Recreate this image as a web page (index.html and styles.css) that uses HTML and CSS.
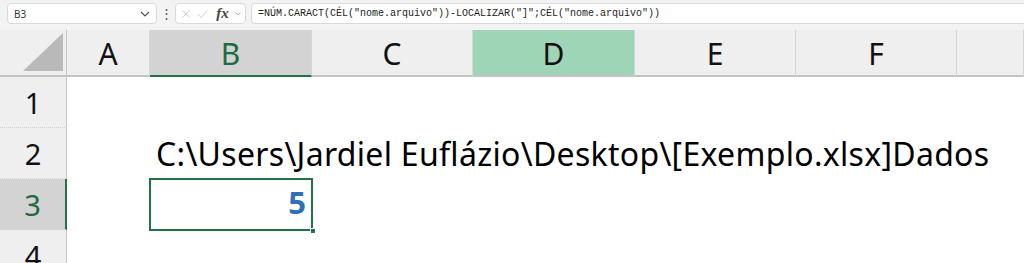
FILE: index.html
```html
<!DOCTYPE html>
<html lang="pt">
<head>
    <meta charset="UTF-8">
    <title>Planilha</title>
    <link rel="stylesheet" href="styles.css">
</head>
<body>
<div class="toolbar">
    <div class="name_box">
        <span>B3</span>
        <svg class="chevron" width="10" height="6" viewBox="0 0 10 6"><path d="M1 1 L5 5 L9 1" fill="none" stroke="#555" stroke-width="1.2"/></svg>
    </div>
    <div class="grip">&#8942;</div>
    <div class="fx_box">
        <svg width="14" height="14" viewBox="0 0 14 14"><path d="M2 2 L12 12 M12 2 L2 12" stroke="#c6c6c6" stroke-width="1.2"/></svg>
        <svg width="16" height="14" viewBox="0 0 16 14"><path d="M1 7 L6 12 L15 2" fill="none" stroke="#c6c6c6" stroke-width="1.2"/></svg>
        <span class="fx">fx</span>
        <svg width="9" height="6" viewBox="0 0 9 6"><path d="M1 1 L4.5 4.5 L8 1" fill="none" stroke="#888" stroke-width="1"/></svg>
    </div>
    <div class="formula_box">=NÚM.CARACT(CÉL("nome.arquivo"))-LOCALIZAR("]";CÉL("nome.arquivo"))</div>
</div>
<div class="sheet">
    <div class="corner"><div class="triangle"></div></div>
    <div class="col_head">A</div>
    <div class="col_head col_active">B</div>
    <div class="col_head">C</div>
    <div class="col_head col_marked">D</div>
    <div class="col_head">E</div>
    <div class="col_head">F</div>
    <div class="col_head"></div>

    <div class="row_head">1</div>
    <div class="cells"></div>

    <div class="row_head">2</div>
    <div class="cell"></div>
    <div class="cell text_cell">C:\Users\Jardiel Euflázio\Desktop\[Exemplo.xlsx]Dados</div>

    <div class="row_head row_active">3</div>
    <div class="cell"></div>
    <div class="cell selected">5<div class="handle"></div></div>
    <div class="cells_rest"></div>

    <div class="row_head">4</div>
    <div class="cells"></div>
</div>
</body>
</html>
```

FILE: styles.css
```css
* {
    box-sizing: border-box;
}

body {
    margin: 0;
    width: 1024px;
    height: 263px;
    overflow: hidden;
    background: white;
    font-family: "Noto Sans", sans-serif;
}

.toolbar {
    height: 30px;
    background: #f3f3f3;
    display: flex;
    align-items: flex-start;
    padding: 3px 0 0 7px;
}

.name_box {
    width: 150px;
    height: 21px;
    background: white;
    border: 1px solid #dadada;
    border-radius: 4px;
    display: flex;
    align-items: center;
    justify-content: space-between;
    padding: 0 6px 0 6px;
    font-size: 10px;
    color: #333;
}

.grip {
    width: 18px;
    text-align: center;
    font-size: 13px;
    line-height: 21px;
    color: #555;
}

.fx_box {
    width: 71px;
    height: 21px;
    background: white;
    border: 1px solid #dadada;
    border-radius: 4px;
    display: flex;
    align-items: center;
    gap: 6px;
    padding: 0 4px 0 5px;
}

.fx {
    font-family: "Liberation Serif", serif;
    font-style: italic;
    font-size: 15px;
    font-weight: bold;
    color: #444;
    margin-left: 2px;
}

.formula_box {
    flex: 1;
    height: 21px;
    margin-left: 5px;
    background: white;
    border: 1px solid #dadada;
    border-right: none;
    border-radius: 4px 0 0 4px;
    font-family: "Liberation Mono", monospace;
    font-size: 10px;
    line-height: 19px;
    padding-left: 6px;
    color: #222;
}

.sheet {
    display: grid;
    grid-template-columns: 67px 83px 162px 161px 162px 161px 161px 1fr;
    grid-template-rows: 47px 51px 51px 51px 51px;
    font-size: 30px;
}

.corner {
    background: #efefef;
    border-right: 1px solid #c8c8c8;
    border-bottom: 2px solid #c3c3c3;
    padding: 3px 3px 4px 23px;
}

.triangle {
    width: 100%;
    height: 100%;
    background: #b9b9b9;
    clip-path: polygon(100% 0, 100% 100%, 0 100%);
}

.col_head {
    background: #efefef;
    border-right: 1px solid #d6d6d6;
    border-bottom: 2px solid #c3c3c3;
    display: flex;
    align-items: center;
    justify-content: center;
    color: #111;
    padding-top: 2px;
}

.col_active {
    background: #d3d3d3;
    border-bottom: 2px solid #217346;
    color: #1e6b40;
}

.col_marked {
    background: #9fd5b7;
}

.row_head {
    background: #efefef;
    border-right: 1px solid #c8c8c8;
    border-bottom: 1px dotted #d4d4d4;
    display: flex;
    align-items: center;
    justify-content: center;
    color: #111;
    font-size: 29px;
}

.row_active {
    background: #d3d3d3;
    border-right: 2px solid #217346;
    color: #1e6b40;
}

.cells {
    grid-column: 2 / -1;
}

.cells_rest {
    grid-column: 4 / -1;
}

.text_cell {
    grid-column: 3 / -1;
    white-space: nowrap;
    padding: 4px 0 0 6px;
    color: #000;
    font-size: 32px;
    letter-spacing: 0.3px;
}

.selected {
    position: relative;
    outline: 2px solid #217346;
    outline-offset: -1px;
    text-align: right;
    font-weight: bold;
    color: #2f6fb7;
    padding: 2px 6px 0 0;
    font-size: 31px;
}

.handle {
    position: absolute;
    right: -4px;
    bottom: -4px;
    width: 6px;
    height: 6px;
    background: #217346;
    border: 1px solid white;
}
```
